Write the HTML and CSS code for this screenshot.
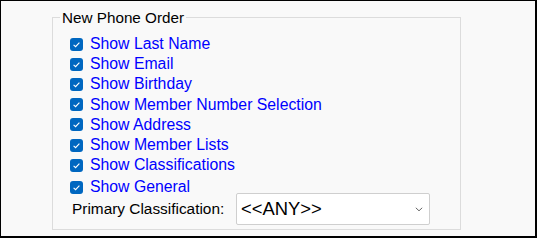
FILE: index.html
```html
<!DOCTYPE html>
<html lang="en">
<head>
  <meta charset="UTF-8" />
  <title>Phone Order Options</title>
  <link rel="stylesheet" href="styles.css">
</head>
<body>

<div class="frame">
  <fieldset class="group">
    <legend>New Phone Order</legend>

    <label class="opt"><span class="box"><svg viewBox="0 0 13 13"><path d="M3.6 6.8 L5.6 8.7 L9.4 4.6" /></svg></span>Show Last Name</label>
    <label class="opt"><span class="box"><svg viewBox="0 0 13 13"><path d="M3.6 6.8 L5.6 8.7 L9.4 4.6" /></svg></span>Show Email</label>
    <label class="opt"><span class="box"><svg viewBox="0 0 13 13"><path d="M3.6 6.8 L5.6 8.7 L9.4 4.6" /></svg></span>Show Birthday</label>
    <label class="opt"><span class="box"><svg viewBox="0 0 13 13"><path d="M3.6 6.8 L5.6 8.7 L9.4 4.6" /></svg></span>Show Member Number Selection</label>
    <label class="opt"><span class="box"><svg viewBox="0 0 13 13"><path d="M3.6 6.8 L5.6 8.7 L9.4 4.6" /></svg></span>Show Address</label>
    <label class="opt"><span class="box"><svg viewBox="0 0 13 13"><path d="M3.6 6.8 L5.6 8.7 L9.4 4.6" /></svg></span>Show Member Lists</label>
    <label class="opt"><span class="box"><svg viewBox="0 0 13 13"><path d="M3.6 6.8 L5.6 8.7 L9.4 4.6" /></svg></span>Show Classifications</label>
    <label class="opt general"><span class="box"><svg viewBox="0 0 13 13"><path d="M3.6 6.8 L5.6 8.7 L9.4 4.6" /></svg></span>Show General</label>

    <div class="primary">
      <span class="primary-label">Primary Classification:</span>
      <div class="pick">
        <select>
          <option>&lt;&lt;ANY&gt;&gt;</option>
        </select>
        <svg class="chev" viewBox="0 0 8 5"><path d="M0.8 0.8 L4 3.8 L7.2 0.8" /></svg>
      </div>
    </div>
  </fieldset>
</div>

</body>
</html>
```

FILE: styles.css
```css
body {
  margin: 0;
  font-family: "Liberation Sans", Arial, sans-serif;
}
.frame {
  width: 537px;
  height: 238px;
  box-sizing: border-box;
  border: 1px solid #000;
  border-right-width: 2px;
  border-bottom-width: 2px;
  background: #f9f9f9;
  padding: 8px 0 0 51px;
}
.group {
  width: 409px;
  height: 221px;
  box-sizing: border-box;
  margin: 0;
  padding: 8px 0 0 0;
  border: 1px solid #dcdcdc;
  display: flex;
  flex-direction: column;
}
.group legend {
  margin-left: 7px;
  padding: 0 2px;
  font-size: 15.25px;
  line-height: 17px;
  color: #000;
}
.opt {
  display: flex;
  align-items: center;
  height: 20.2px;
  padding-left: 17px;
  font-size: 15.8px;
  line-height: 20.2px;
  color: #0000ff;
}
.opt.general {
  margin-top: 2px;
}
.box {
  width: 13px;
  height: 13px;
  border-radius: 3px;
  background: #0067c0;
  margin-right: 7px;
  flex: none;
  display: flex;
}
.box svg {
  width: 13px;
  height: 13px;
}
.box path {
  fill: none;
  stroke: #fff;
  stroke-width: 1.1;
}
.primary {
  display: flex;
  align-items: center;
  margin-top: -5px;
  padding-left: 19px;
}
.primary-label {
  width: 164px;
  font-size: 15.4px;
  line-height: 18px;
  color: #000;
}
.pick {
  position: relative;
}
.pick select {
  appearance: none;
  width: 194px;
  height: 32px;
  box-sizing: border-box;
  margin: 0;
  padding: 0 0 0 4px;
  border: 1px solid #cfcfcf;
  border-radius: 2px;
  background: #fff;
  font-family: "Liberation Sans", Arial, sans-serif;
  font-size: 18.4px;
  color: #000;
}
.chev {
  position: absolute;
  right: 7px;
  top: 14px;
  width: 8px;
  height: 5px;
}
.chev path {
  fill: none;
  stroke: #666;
  stroke-width: 1;
}
```
